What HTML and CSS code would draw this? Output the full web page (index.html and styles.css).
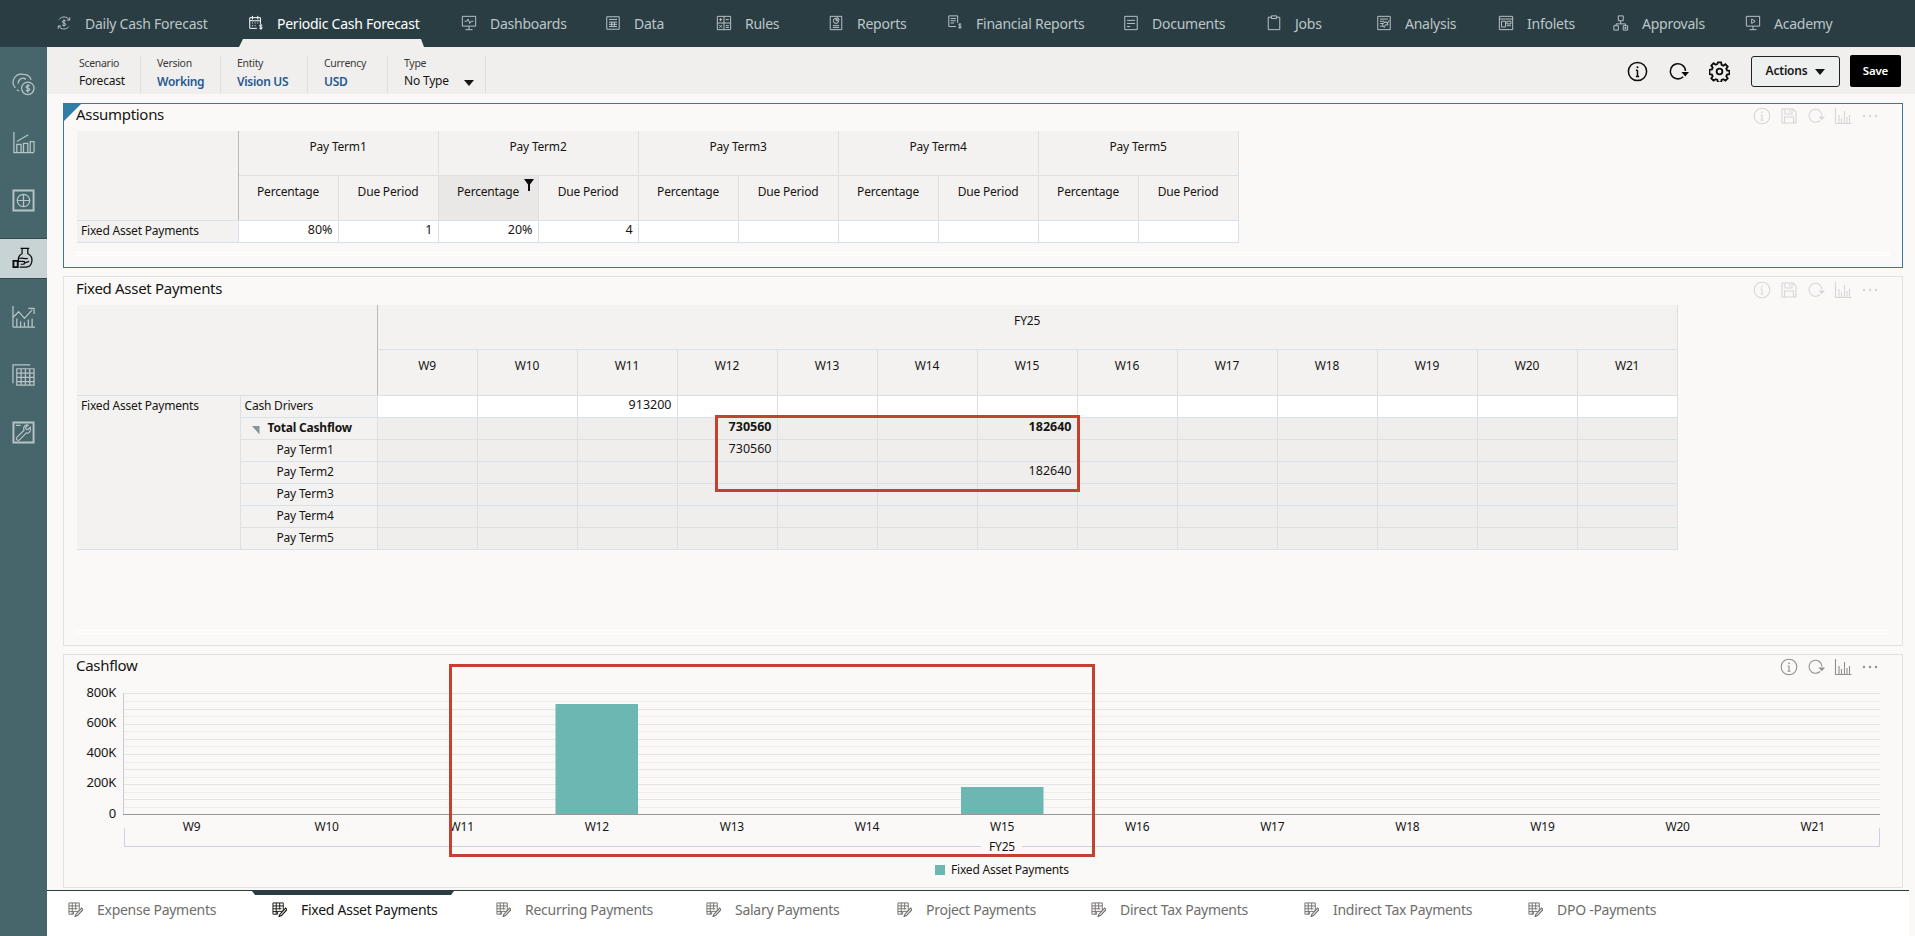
FILE: index.html
```html
<!DOCTYPE html>
<html lang="en">
<head>
<meta charset="utf-8">
<title>Periodic Cash Forecast</title>
<link rel="stylesheet" href="styles.css">
</head>
<body>
<svg class="defs" aria-hidden="true">
  <symbol id="i-info" viewBox="0 0 18 18"><circle cx="9" cy="9" r="7.8"/><path d="M9 8v5.2M7.6 13.2h2.8M7.6 8H9"/><circle class="dot" cx="9" cy="5.3" r=".9"/></symbol>
  <symbol id="i-save" viewBox="0 0 18 18"><path d="M2 2h11l3 3v11H2zM5 2v5h7V2M4.500 16v-6h9v6M9.500 3.500v2"/></symbol>
  <symbol id="i-refresh" viewBox="0 0 18 18"><path d="M15 8.500A6.500 6.500 0 1 0 13 13.500"/><path class="solid" d="M11.500 9.500h6.500l-3.200 3.800z"/></symbol>
  <symbol id="i-bars" viewBox="0 0 18 18"><path d="M1.500 1v15.500h16M5 16V8M7.500 16v-5M10.500 16V4M13 16v-6M15.500 16V8"/></symbol>
  <symbol id="i-dots" viewBox="0 0 18 18"><circle class="dot" cx="3" cy="9" r="1.200"/><circle class="dot" cx="9" cy="9" r="1.200"/><circle class="dot" cx="15" cy="9" r="1.200"/></symbol>
  <symbol id="i-tab" viewBox="0 0 16 16"><path d="M1 1h11v9H6v3H1zM1 4.200h11M1 7.200h9M1 10.200h5M4.500 1v12M8.200 1v7"/><path class="thick" d="M14.500 6.500 8.500 13l-1 2.500 2.600-1 6-6.500z"/></symbol>
</svg>

<nav class="topnav">
  <a class="navitem"><svg class="navicon" viewBox="0 0 18 18"><path d="M3.500 5A7 7 0 0 1 15 5.500M14.500 13A7 7 0 0 1 3 12.500M15.500 2.500v3.200h-3.200M2.500 15.500v-3.200h3.200M11 6.800c-.6-1-3.800-1-3.800.8 0 2 3.800 1 3.800 3 0 1.800-3.300 1.600-4 .6M9 5v8"/></svg>Daily Cash Forecast</a>
  <a class="navitem active"><svg class="navicon" viewBox="0 0 18 18"><path d="M2 3h12v7M10 15H2V3M5 1v4M11 1v4M2 6.500h12M4.500 9h1M7.500 9h1M10.500 9h1M4.500 12h1M7.500 12h1M16 11.500c-.5-.7-3-.7-3 .7 0 1.500 3 .7 3 2.200 0 1.400-2.600 1.200-3.200.4M14.500 10.500v6"/></svg>Periodic Cash Forecast</a>
  <a class="navitem"><svg class="navicon" viewBox="0 0 18 18"><path d="M1.500 1.500h15v11h-15zM9 12.500v4M5 16.500h8M4 7h2.500L8 4.500l2 5 1.500-2.500H14"/></svg>Dashboards</a>
  <a class="navitem"><svg class="navicon" viewBox="0 0 18 18"><path d="M2 2h14v14H2zM4.500 5h9M4.500 8h9M4.500 10.500h9M4.500 13h9M7.500 8v5M10.500 8v5"/></svg>Data</a>
  <a class="navitem"><svg class="navicon" viewBox="0 0 18 18"><path d="M1.500 1.500h15v15h-15zM9 1.500v15M1.500 9h15M3.500 5.200h3.500M5.200 3.500V7M11 5.200h3.500M3.700 11.300l3 3M6.700 11.300l-3 3M11 12h3.500M11 14h3.500"/></svg>Rules</a>
  <a class="navitem"><svg class="navicon" viewBox="0 0 18 18"><path d="M2.500 1.500h13v15h-13zM5.500 12h7M5.500 14h7M12 6.500a3 3 0 1 1-3-3v3zM10 2.800a3 3 0 0 1 2.500 2.700H10z"/></svg>Reports</a>
  <a class="navitem"><svg class="navicon" viewBox="0 0 18 18"><path d="M10 13H2V1h10v8M4 4h6M4 6.500h6M4 9h4M16 10.500c-.5-.7-3-.7-3 .6 0 1.500 3 .7 3 2.300 0 1.400-2.600 1.200-3.200.4M14.500 9.500v6"/></svg>Financial Reports</a>
  <a class="navitem"><svg class="navicon" viewBox="0 0 18 18"><path d="M2 1.500h14v15H2zM4.500 6h9M4.500 9.500h9M4.500 13h3.500"/></svg>Documents</a>
  <a class="navitem"><svg class="navicon" viewBox="0 0 18 18"><path d="M6 2.500H2.500v14h13v-14H12M6 1h6v3H6z"/></svg>Jobs</a>
  <a class="navitem"><svg class="navicon" viewBox="0 0 18 18"><path d="M2 1.500h14v15H2zM4.500 4.500h9M4.500 7h5M4.500 9.500h3.500M4.500 12.500h3.500M9.500 14a3 3 0 1 1 4-2.800l-3-.2zM11 7l2 2 2-3"/></svg>Analysis</a>
  <a class="navitem"><svg class="navicon" viewBox="0 0 18 18"><path d="M1.500 1.500h15v15h-15zM1.500 4.500h15M4 7h4.500v6.500H4zM10 7h4.500v3H10zM10 12h4.500"/></svg>Infolets</a>
  <a class="navitem"><svg class="navicon" viewBox="0 0 18 18"><path d="M6 1h5.500v5.500H6zM8.700 6.500V10M3.500 10h10.500M3.500 10v2M14 10v2M1 12h5v5H1zM11.500 12h5v5h-5zM13.500 13.500v2l1.500-1z"/></svg>Approvals</a>
  <a class="navitem"><svg class="navicon" viewBox="0 0 18 18"><path d="M1.500 1.500h15v11h-15zM9 12.500v4M5 16.500h8M7.500 4.500 11.500 7l-4 2.500z"/></svg>Academy</a>
</nav>

<div class="shell">
  <aside class="rail">
    <a class="railitem"><svg class="railicon" viewBox="0 0 24 24"><path d="M3.500 15.500A8.500 8.500 0 0 1 12 1.500a8.500 8.500 0 0 1 8 5.500M6.500 11a5 5 0 0 1 8-4.500M7 7.500l1 1M10.500 5v1M14 5.500l-1 1.200M5 17.500c.7.500 1.500 1 2.500 1.300"/><circle cx="16.500" cy="16" r="6.500"/><path d="M18.500 13.800c-.6-.8-3.800-.8-3.800.8 0 1.800 3.800.8 3.800 2.700 0 1.600-3.300 1.400-4 .5M16.500 11.500v9"/></svg></a>
    <a class="railitem"><svg class="railicon" viewBox="0 0 24 24"><path d="M2 1v21.500h21M5 22V14h4.500v8M12 22v-9h4.500v9M19 22V11h4v11M5 11l12-7"/></svg></a>
    <a class="railitem"><svg class="railicon" viewBox="0 0 24 24"><path class="heavy" d="M1.500 1.500h21v21h-21z"/><circle cx="12" cy="12" r="6.500"/><path d="M12 5.500v13M5.500 12h13"/></svg></a>
    <a class="railitem on"><svg class="railicon" viewBox="0 0 24 24"><path d="M9 1.500h9M10.500 1.500V7C7 8.500 6 12 7 14.500M16.500 1.500V7c3 1.500 5 5 4 9-.7 3-3.500 5-6.500 5H8"/><path d="M7.500 12c3-1.500 6 1 9 0M6 15h6c2 0 2 3 0 3H9M12 17l6-2"/><path class="heavy" d="M1.500 14.500h4.500v6.500H1.500z"/></svg></a>
    <a class="railitem"><svg class="railicon" viewBox="0 0 24 24"><path d="M1 23V1M1 23h23M1 13l6-6 6 7 8-9M17 3.500h6v6M5 23v-9M9 23v-6M13 23v-5M17 23v-8M21 23v-9"/></svg></a>
    <a class="railitem"><svg class="railicon" viewBox="0 0 24 24"><path d="M1 21V2h18"/><path d="M5 6h18v17H5zM5 10.500h18M5 15h18M5 19.500h18M9.500 6v17M14 6v17M18.500 6v17"/></svg></a>
    <a class="railitem"><svg class="railicon" viewBox="0 0 24 24"><path class="heavy" d="M1.500 1.500h21v21h-21z"/><path d="M4 4.500h5M19 6.500l-2.500 2.500-1.800-.5-.5-1.800L16.700 4.300c-2.200-.8-5 1-4.500 4 0 .7.200 1 .2 1.500L5 17c-1.500 2 1 4.300 2.800 2.700l7.200-7.300c3 1 5-1.800 4-5.900z"/></svg></a>
  </aside>

  <main class="content">
    <header class="pov">
      <div class="povlist">
        <div class="povitem"><span class="povlabel">Scenario</span><span class="povvalue">Forecast</span></div>
        <div class="povitem"><span class="povlabel">Version</span><span class="povvalue link">Working</span></div>
        <div class="povitem"><span class="povlabel">Entity</span><span class="povvalue link">Vision US</span></div>
        <div class="povitem"><span class="povlabel">Currency</span><span class="povvalue link">USD</span></div>
        <div class="povitem"><span class="povlabel">Type</span><span class="povvalue">No Type<i class="caret povcaret"></i></span></div>
      </div>
      <div class="povactions">
        <svg class="povicon"><use href="#i-info"/></svg>
        <svg class="povicon"><use href="#i-refresh"/></svg>
        <svg class="povicon gear" viewBox="0 0 22 22"><circle cx="11" cy="11" r="3"/><path d="M9.300 1.500h3.400l.5 2.600 1.800.8 2.200-1.500 2.400 2.400-1.500 2.200.8 1.800 2.600.5v3.400l-2.600.5-.8 1.800 1.500 2.200-2.400 2.400-2.200-1.500-1.800.8-.5 2.600H9.300l-.5-2.600-1.800-.8-2.200 1.500-2.400-2.400 1.500-2.200-.8-1.800-2.600-.5V9.300l2.600-.5.800-1.800-1.500-2.200 2.400-2.400 2.200 1.500 1.800-.8z"/></svg>
        <button class="btn-actions">Actions<i class="caret"></i></button>
        <button class="btn-save">Save</button>
      </div>
    </header>

    <section class="panel selected p-assump">
      <i class="flag"></i>
      <div class="phead">
        <h2>Assumptions</h2>
        <div class="ptools faint">
          <svg><use href="#i-info"/></svg><svg><use href="#i-save"/></svg><svg><use href="#i-refresh"/></svg><svg><use href="#i-bars"/></svg><svg><use href="#i-dots"/></svg>
        </div>
      </div>
      <table class="grid g1">
        <colgroup><col class="c161"><col span="10" class="c100"></colgroup>
        <tr class="h44">
          <th class="corner" rowspan="2"></th>
          <th colspan="2">Pay Term1</th><th colspan="2">Pay Term2</th><th colspan="2">Pay Term3</th><th colspan="2">Pay Term4</th><th colspan="2">Pay Term5</th>
        </tr>
        <tr class="h45">
          <th>Percentage</th><th>Due Period</th>
          <th class="filtered">Percentage<svg class="funnel" viewBox="0 0 10 12"><path d="M0 0h10L6 5.500V12H4V5.500z"/></svg></th><th>Due Period</th>
          <th>Percentage</th><th>Due Period</th><th>Percentage</th><th>Due Period</th><th>Percentage</th><th>Due Period</th>
        </tr>
        <tr class="row white">
          <th class="rowh" scope="row">Fixed Asset Payments</th>
          <td>80%</td><td>1</td><td>20%</td><td>4</td><td></td><td></td><td></td><td></td><td></td><td></td>
        </tr>
      </table>
      <div class="pstrip"></div>
    </section>

    <section class="panel p-fixed">
      <div class="phead">
        <h2>Fixed Asset Payments</h2>
        <div class="ptools faint">
          <svg><use href="#i-info"/></svg><svg><use href="#i-save"/></svg><svg><use href="#i-refresh"/></svg><svg><use href="#i-bars"/></svg><svg><use href="#i-dots"/></svg>
        </div>
      </div>
      <table class="grid g2">
        <colgroup><col class="c163"><col class="c137"><col span="13" class="c100"></colgroup>
        <tr class="h44"><th class="corner" colspan="2" rowspan="2"></th><th colspan="13">FY25</th></tr>
        <tr class="h46"><th>W9</th><th>W10</th><th>W11</th><th>W12</th><th>W13</th><th>W14</th><th>W15</th><th>W16</th><th>W17</th><th>W18</th><th>W19</th><th>W20</th><th>W21</th></tr>
        <tr class="row white"><th class="rowh" rowspan="7" scope="rowgroup">Fixed Asset Payments</th><th class="rowh sub">Cash Drivers</th><td></td><td></td><td>913200</td><td></td><td></td><td></td><td></td><td></td><td></td><td></td><td></td><td></td><td></td></tr>
        <tr class="row"><th class="rowh sub total"><i class="expander"></i>Total Cashflow</th><td></td><td></td><td></td><td class="b">730560</td><td></td><td></td><td class="b">182640</td><td></td><td></td><td></td><td></td><td></td><td></td></tr>
        <tr class="row"><th class="rowh sub ind">Pay Term1</th><td></td><td></td><td></td><td>730560</td><td></td><td></td><td></td><td></td><td></td><td></td><td></td><td></td><td></td></tr>
        <tr class="row"><th class="rowh sub ind">Pay Term2</th><td></td><td></td><td></td><td></td><td></td><td></td><td>182640</td><td></td><td></td><td></td><td></td><td></td><td></td></tr>
        <tr class="row"><th class="rowh sub ind">Pay Term3</th><td></td><td></td><td></td><td></td><td></td><td></td><td></td><td></td><td></td><td></td><td></td><td></td><td></td></tr>
        <tr class="row"><th class="rowh sub ind">Pay Term4</th><td></td><td></td><td></td><td></td><td></td><td></td><td></td><td></td><td></td><td></td><td></td><td></td><td></td></tr>
        <tr class="row"><th class="rowh sub ind">Pay Term5</th><td></td><td></td><td></td><td></td><td></td><td></td><td></td><td></td><td></td><td></td><td></td><td></td><td></td></tr>
      </table>
      <div class="pstrip"></div>
      <div class="callout call-grid"></div>
    </section>

    <section class="panel p-chart">
      <div class="phead">
        <h2>Cashflow</h2>
        <div class="ptools">
          <svg><use href="#i-info"/></svg><svg><use href="#i-refresh"/></svg><svg><use href="#i-bars"/></svg><svg><use href="#i-dots"/></svg>
        </div>
      </div>
      <svg class="chart" viewBox="64 682 1838 205">
        <g class="minor"><path d="M124 701.500H1880M124 716.500H1880M124 731.500H1880M124 746.500H1880M124 762.500H1880M124 777.500H1880M124 792.500H1880M124 807.500H1880"/></g>
        <g class="major"><path d="M124 693.500H1880M124 709.500H1880M124 724.500H1880M124 739.500H1880M124 754.500H1880M124 769.500H1880M124 784.500H1880M124 799.500H1880"/></g>
        <rect class="bar" x="555.500" y="704" width="82.500" height="110"/>
        <rect class="bar" x="961" y="787" width="82.500" height="27"/>
        <path class="yaxis" d="M123.500 693V814"/>
        <path class="xaxis" d="M123 814.500H1880"/>
        <g class="ylab">
          <text x="116" y="697">800K</text><text x="116" y="727">600K</text><text x="116" y="757">400K</text><text x="116" y="787">200K</text><text x="116" y="818">0</text>
        </g>
        <g class="xlab">
          <text x="191.500" y="831">W9</text><text x="326.600" y="831">W10</text><text x="461.700" y="831">W11</text><text x="596.800" y="831">W12</text><text x="731.900" y="831">W13</text><text x="867" y="831">W14</text><text x="1002.100" y="831">W15</text><text x="1137.200" y="831">W16</text><text x="1272.300" y="831">W17</text><text x="1407.400" y="831">W18</text><text x="1542.500" y="831">W19</text><text x="1677.600" y="831">W20</text><text x="1812.700" y="831">W21</text>
        </g>
        <path class="bracket" d="M124.500 828V846.500H981M1022 846.500H1879.500V828"/>
        <text class="xgroup" x="1002" y="850.500">FY25</text>
        <rect class="bar" x="935" y="865" width="10" height="10"/>
        <text class="legend" x="951" y="873.500">Fixed Asset Payments</text>
      </svg>
      <div class="callout call-chart"></div>
    </section>

    <footer class="tabs">
      <a class="tab"><svg><use href="#i-tab"/></svg>Expense Payments</a>
      <a class="tab active"><svg><use href="#i-tab"/></svg>Fixed Asset Payments</a>
      <a class="tab"><svg><use href="#i-tab"/></svg>Recurring Payments</a>
      <a class="tab"><svg><use href="#i-tab"/></svg>Salary Payments</a>
      <a class="tab"><svg><use href="#i-tab"/></svg>Project Payments</a>
      <a class="tab"><svg><use href="#i-tab"/></svg>Direct Tax Payments</a>
      <a class="tab"><svg><use href="#i-tab"/></svg>Indirect Tax Payments</a>
      <a class="tab"><svg><use href="#i-tab"/></svg>DPO -Payments</a>
    </footer>
  </main>
</div>
</body>
</html>
```

FILE: styles.css
```css
* { box-sizing: border-box; }
html, body { margin: 0; height: 100%; overflow: hidden; }
body {
  font-family: "Noto Sans", "Open Sans", sans-serif;
  font-size: 12px;
  color: #161513;
  background: #faf9f7;
  display: flex;
  flex-direction: column;
}
.defs { position: absolute; width: 0; height: 0; }
svg { fill: none; stroke: currentColor; stroke-width: 1.2; display: block; }
.dot, .solid { fill: currentColor; stroke: none; }
.thick { fill: #faf9f7; stroke-width: 1.2; }

/* top navigation */
.topnav {
  height: 47px;
  flex: none;
  background: #293d43;
  display: grid;
  grid-template-columns: 192px 213px 144px 111px 112px 119px 176px 143px 110px 122px 115px 132px 1fr;
  padding-left: 56px;
}
.navitem {
  position: relative;
  display: flex;
  align-items: center;
  height: 46px;
  gap: 13px;
  font-size: 14px;
  letter-spacing: -.25px;
  color: #bcc5c7;
  white-space: nowrap;
}
.navitem.active { color: #fff; }
.navitem.active::after {
  content: "";
  position: absolute;
  left: -9px;
  width: 185px;
  top: 39px;
  height: 8px;
  background: #f0efee;
  clip-path: polygon(4px 0, calc(100% - 3px) 0, 100% 100%, 0 100%);
}
.navicon { width: 16px; height: 16px; flex: none; stroke-width: 1.1; }

.shell { flex: 1; display: flex; min-height: 0; }

/* left rail */
.rail {
  width: 47px;
  flex: none;
  background: #46666c;
  padding-top: 17px;
  display: flex;
  flex-direction: column;
  gap: 17px;
}
.railitem {
  height: 41px;
  display: flex;
  align-items: center;
  justify-content: center;
  color: #b7c4c6;
  border-top: 1px solid transparent;
  border-bottom: 1px solid transparent;
}
.railitem.on {
  background: #c7d3d5;
  color: #0c0c0c;
  border-color: #34494e;
}
.railicon { width: 23px; height: 23px; stroke-width: 1.3; }
.heavy { stroke-width: 2; }

.content { flex: 1; min-width: 0; display: flex; flex-direction: column; }

/* point of view bar */
.pov {
  height: 47px;
  flex: none;
  background: #f0efee;
  display: flex;
  justify-content: space-between;
  padding: 9px 14px 0 32px;
}
.povlist {
  display: grid;
  grid-template-columns: 62px 80px 87px 80px 98px;
  height: 32px;
}
.povitem {
  display: flex;
  flex-direction: column;
  border-right: 1px solid #dfdedc;
  padding-left: 16px;
}
.povitem:first-child { padding-left: 0; }
.povlabel { font-size: 10.5px; line-height: 14px; letter-spacing: -.3px; color: #3a3936; }
.povvalue { font-size: 12px; line-height: 22px; letter-spacing: -.2px; white-space: nowrap; display: flex; align-items: center; }
.povvalue.link { color: #26598f; font-weight: 600; letter-spacing: -.3px; margin-top: 1px; }
.caret {
  display: inline-block;
  width: 0;
  height: 0;
  border-left: 5px solid transparent;
  border-right: 5px solid transparent;
  border-top: 6px solid #161513;
  margin-left: 8px;
}
.povcaret { margin-left: 15px; margin-top: 3px; }
.povactions { display: flex; align-items: flex-start; }
.povicon { width: 21px; height: 21px; margin-top: 5px; margin-right: 20px; color: #0c0c0c; stroke-width: 1.3; }
.gear { stroke-width: 1.9; }
.btn-actions {
  font: 600 12px "Noto Sans", sans-serif;
  letter-spacing: -.2px;
  width: 89px;
  height: 31px;
  background: #eef0f0;
  border: 1px solid #222;
  border-radius: 3px;
  padding: 0 0 2px;
  margin-left: 1px;
  color: #161513;
}
.btn-save {
  font: 600 11.5px "Noto Sans", sans-serif;
  letter-spacing: -.2px;
  width: 51px;
  height: 32px;
  padding: 0 0 2px;
  margin-left: 10px;
  margin-top: -1px;
  background: #000;
  color: #fff;
  border: 0;
  border-radius: 2px;
}

/* panels */
.panel {
  position: relative;
  flex: none;
  display: flex;
  flex-direction: column;
  margin: 8px 12px 0 16px;
  background: #faf9f7;
  border: 1px solid #e2e2e0;
}
.p-assump { height: 165px; margin-top: 9px; }
.p-fixed { height: 370px; }
.p-chart { height: 234px; }
.panel.selected { border-color: #2f7c9f; }
.flag {
  position: absolute;
  left: 0;
  top: 0;
  width: 17px;
  height: 17px;
  background: #2f7ea5;
  clip-path: polygon(0 0, 100% 0, 0 100%);
}
.phead {
  flex: none;
  height: 27px;
  display: flex;
  justify-content: space-between;
  padding: 0 23px 0 12px;
}
.p-fixed .phead { height: 28px; padding-top: 1px; }
.phead h2 {
  margin: 0;
  font-size: 15px;
  font-weight: 400;
  line-height: 21px;
  letter-spacing: -.3px;
}
.ptools { display: flex; gap: 9px; padding-top: 3px; color: #8f8f8d; }
.ptools.faint { color: #d6d6da; }
.ptools svg { width: 18px; height: 18px; stroke-width: 1.1; }
.pstrip {
  flex: none;
  height: 4px;
  margin: auto 12px 11px 12px;
  border-top: 1px solid #fff;
  border-bottom: 1px solid #fff;
}

/* grids */
.grid {
  flex: none;
  margin-left: 13px;
  border-collapse: collapse;
  table-layout: fixed;
}
.g1 { width: 1161px; }
.g2 { width: 1600px; }
.c161 { width: 161px; }
.c163 { width: 163px; }
.c137 { width: 137px; }
.c100 { width: 100px; }
.grid th, .grid td {
  padding: 0 5px;
  border: 1px solid #d9e0e8;
  font-size: 12px;
  letter-spacing: -.2px;
  font-weight: 400;
  vertical-align: top;
  white-space: nowrap;
}
.grid th { background: #f3f2f0; padding-top: 7px; text-align: center; position: relative; }
.grid tr:first-child th { border-top: 0; }
.grid th.corner { border: 0; border-right: 1px solid #b9b9b7; border-bottom: 1px solid #d9e0e8; }
.grid td { background: #f0eeec; text-align: right; line-height: 17px; font-size: 12.5px; letter-spacing: 0; }
.row { height: 22px; }
.row.white td { background: #fff; }
.h44 { height: 44px; }
.h45 { height: 45px; }
.h46 { height: 46px; }
.grid th.rowh { text-align: left; padding: 0 4px; line-height: 19px; border-left: 0; border-top: 0; }
.grid th.sub { border-right: 0; }
.grid th.ind { padding-left: 36px; }
.grid th.total { padding-left: 27px; font-weight: 700; }
.grid td.b { font-weight: 700; }
.grid th.filtered { background: #e9e8e6; }
.funnel { position: absolute; right: 4px; top: 3px; width: 10px; height: 12px; fill: #0c0c0c; stroke: none; }
.expander {
  position: absolute;
  left: 11px;
  top: 8px;
  width: 8px;
  height: 9px;
  background: #84969a;
  clip-path: polygon(0 0, 100% 0, 100% 100%);
}

/* overlays */
.callout { position: absolute; border: 3px solid #c1432f; pointer-events: none; }
.call-grid { left: 651px; top: 138px; width: 365px; height: 77px; }
.call-chart { left: 385px; top: 9px; width: 646px; height: 193px; }

/* chart */
.chart { flex: none; width: 1838px; height: 205px; stroke: none; }
.chart text { stroke: none; fill: #161513; font-family: "Noto Sans", sans-serif; letter-spacing: -.2px; }
.minor path { stroke: #efeeec; stroke-width: 1; }
.major path { stroke: #e3e4e8; stroke-width: 1; }
.bar { fill: #6cb7b2; }
.yaxis { stroke: #c9c9d4; stroke-width: 1; }
.xaxis { stroke: #9a9a98; stroke-width: 1; }
.ylab text { font-size: 13px; text-anchor: end; }
.xlab text { font-size: 12px; text-anchor: middle; }
.bracket { stroke: #cfcfe0; stroke-width: 1; fill: none; }
.chart .xgroup { font-size: 12px; text-anchor: middle; }
.chart .legend { font-size: 12px; }

/* bottom tabs */
.tabs {
  margin: auto 6px 0 0;
  height: 46px;
  flex: none;
  background: #fff;
  border-top: 1px solid #293d43;
  display: grid;
  grid-template-columns: 204px 224px 210px 191px 194px 213px 224px 1fr;
  padding-left: 21px;
}
.tab {
  position: relative;
  display: flex;
  align-items: center;
  gap: 14px;
  height: 36px;
  font-size: 14px;
  letter-spacing: -.27px;
  color: #6f6e6b;
  white-space: nowrap;
}
.tab svg { width: 15px; height: 15px; stroke-width: 1; flex: none; }
.tab.active { color: #161513; }
.tab.active::before {
  content: "";
  position: absolute;
  left: -20px;
  width: 202px;
  top: 0;
  height: 4px;
  background: #293d43;
  clip-path: polygon(0 0, 100% 0, calc(100% - 3px) 100%, 3px 100%);
}
```
